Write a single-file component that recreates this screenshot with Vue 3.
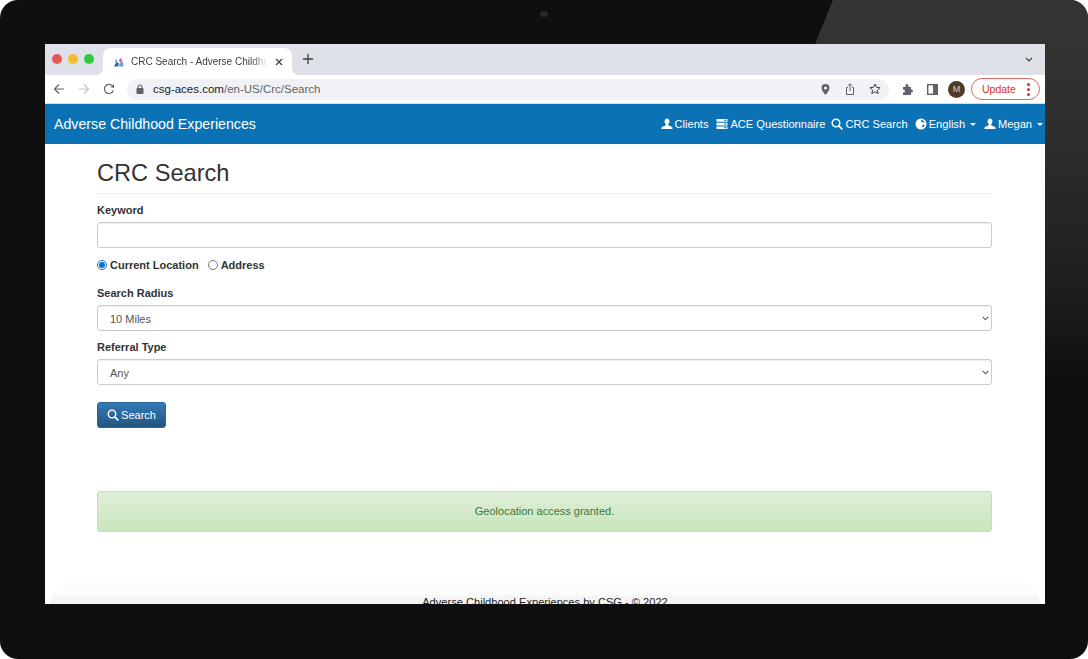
<script setup>
import { ref } from 'vue'

const keyword = ref('')
const locationMode = ref('current')
const radius = ref('10 Miles')
const referral = ref('Any')
</script>

<template>
  <div class="device">
    <div class="sheen"></div>
    <div class="camera"></div>
    <div class="screen">
      <div class="tabstrip">
        <div class="lights">
          <span class="light light--red"></span>
          <span class="light light--yellow"></span>
          <span class="light light--green"></span>
        </div>
        <div class="tab">
          <svg class="favicon" width="10" height="10" viewBox="0 0 10 10">
            <path d="M2 1.500 3.500 5 1 5.500z" fill="#5b9bdc" />
            <path d="M6 1l2.500 2L7 6 5 4z" fill="#e0608f" />
            <path d="M0 9.500 2.500 5 5 6.500 4 9.500z" fill="#2f5fb5" />
            <path d="M5.500 6.500 9 4.500l.5 5H5z" fill="#58a9df" />
          </svg>
          <span class="tab__title">CRC Search - Adverse Childhood</span>
          <svg class="tab__close" width="8" height="8" viewBox="0 0 8 8">
            <path d="M1 1l6 6M7 1 1 7" stroke="#3c4043" stroke-width="1.2" fill="none" />
          </svg>
        </div>
        <svg class="newtab" width="10" height="10" viewBox="0 0 10 10">
          <path d="M5 0v10M0 5h10" stroke="#3c4043" stroke-width="1.3" />
        </svg>
        <svg class="tabmenu" width="8" height="5" viewBox="0 0 8 5">
          <path d="M1 1l3 3 3-3" stroke="#3c4043" stroke-width="1.2" fill="none" />
        </svg>
      </div>

      <div class="toolbar">
        <svg width="12" height="12" viewBox="0 0 12 12">
          <path d="M11 6H1.500M6 1.500 1.500 6 6 10.500" stroke="#5f6368" stroke-width="1.2" fill="none" />
        </svg>
        <svg width="12" height="12" viewBox="0 0 12 12">
          <path d="M1 6h9.500M6 1.500 10.500 6 6 10.500" stroke="#bdc1c6" stroke-width="1.2" fill="none" />
        </svg>
        <svg width="12" height="12" viewBox="0 0 12 12">
          <path d="M10.300 7.500A4.600 4.600 0 1 1 9.400 2.800L11 4.400" stroke="#5f6368" stroke-width="1.200" fill="none" />
          <path d="M11 1v3.600H7.400z" fill="#5f6368" />
        </svg>
        <div class="omnibox">
          <svg width="8" height="10" viewBox="0 0 8 10">
            <rect x="0.500" y="4" width="7" height="6" rx="1" fill="#5f6368" />
            <path d="M2 4.500V3a2 2 0 0 1 4 0v1.500" stroke="#5f6368" stroke-width="1.100" fill="none" />
          </svg>
          <span class="omnibox__url">csg-aces.com<span class="omnibox__path">/en-US/Crc/Search</span></span>
          <svg class="omnibox__pin" width="9" height="11" viewBox="0 0 9 11">
            <path fill-rule="evenodd" d="M4.500 0A4 4 0 0 0 .5 4c0 2.800 4 7 4 7s4-4.200 4-7a4 4 0 0 0-4-4zm0 2.500a1.500 1.500 0 1 1 0 3 1.500 1.500 0 0 1 0-3z" fill="#5f6368" />
          </svg>
          <svg width="10" height="12" viewBox="0 0 10 12">
            <path d="M3 4.500H1.500v7h7v-7H7M5 8V1M3 2.800 5 .8l2 2" stroke="#5f6368" stroke-width="1" fill="none" />
          </svg>
          <svg width="12" height="12" viewBox="0 0 12 12">
            <path d="M6 1l1.500 3.300 3.600.4-2.700 2.400.8 3.500L6 8.800l-3.200 1.800.8-3.500L.9 4.700l3.600-.4z" stroke="#3c4043" stroke-width="1" fill="none" />
          </svg>
        </div>
        <svg width="12" height="12" viewBox="0 0 12 12">
          <path d="M1 4h2.500V2.500a1.500 1.500 0 0 1 3 0V4H9v2.500h.5a1.500 1.500 0 0 1 0 3H9V12H1V9.500h.5a1.500 1.500 0 0 0 0-3H1z" fill="#5f6368" />
        </svg>
        <svg width="11" height="11" viewBox="0 0 11 11">
          <rect x="0.700" y="0.700" width="9.600" height="9.600" fill="none" stroke="#5f6368" stroke-width="1.400" />
          <rect x="6" y="1" width="4" height="9" fill="#5f6368" />
        </svg>
        <span class="avatar">M</span>
        <span class="update">Update<span class="update__dots"><i></i><i></i><i></i></span></span>
      </div>

      <nav class="navbar">
        <span class="navbar__brand">Adverse Childhood Experiences</span>
        <div class="navbar__links">
          <a class="navlink">
            <svg width="12" height="12" viewBox="0 0 12 12"><path d="M6 .5c1.500 0 2.400 1.200 2.400 2.800 0 1.200-.5 2.300-1.200 2.900 0 .9.300 1.300 1 1.600 1.300.5 2.700.9 3.300 1.700v1.500H.5V9.500c.6-.8 2-1.200 3.300-1.700.7-.3 1-.7 1-1.600C4.100 5.600 3.600 4.500 3.600 3.300 3.600 1.700 4.500.5 6 .5z" fill="#fff" /></svg>
            Clients
          </a>
          <a class="navlink navlink--wide">
            <svg width="12" height="12" viewBox="0 0 12 12"><path d="M.5 1h11v2.700H.5zM.5 4.700h11v2.700H.5zM.5 8.400h11v2.700H.5z" fill="#fff" /><path d="M8 2.300h2.500M8 6h2.500M8 9.700h2.500" stroke="#0b72b5" stroke-width=".9" /></svg>
            ACE Questionnaire
          </a>
          <a class="navlink navlink--tight">
            <svg width="12" height="12" viewBox="0 0 12 12"><circle cx="5" cy="5" r="3.800" stroke="#fff" stroke-width="1.500" fill="none" /><path d="M7.800 7.800 11.300 11.300" stroke="#fff" stroke-width="1.800" /></svg>
            CRC Search
          </a>
          <a class="navlink">
            <svg width="12" height="12" viewBox="0 0 12 12"><circle cx="6" cy="6" r="5.500" fill="#fff" /><path d="M6.500 2c1.500 0 2.800 1 3.200 2.300-.8.500-1.500.3-2-.2-.6.300-1.200.2-1.500-.4-.3-.6-.1-1.200.3-1.700zM8 6.500c.8-.2 1.500 0 1.700.4-.3 1.200-1.100 2.200-2.200 2.600-.6-.7-.3-2.300.5-3z" fill="#0b72b5" /></svg>
            English
            <span class="caret"></span>
          </a>
          <a class="navlink navlink--wide">
            <svg width="12" height="12" viewBox="0 0 12 12"><path d="M6 .5c1.500 0 2.400 1.200 2.400 2.800 0 1.200-.5 2.300-1.200 2.900 0 .9.300 1.300 1 1.600 1.300.5 2.700.9 3.300 1.700v1.500H.5V9.500c.6-.8 2-1.200 3.300-1.700.7-.3 1-.7 1-1.600C4.100 5.600 3.600 4.500 3.600 3.300 3.600 1.700 4.500.5 6 .5z" fill="#fff" /></svg>
            Megan
            <span class="caret"></span>
          </a>
        </div>
      </nav>

      <main class="page">
        <h1 class="page__title">CRC Search</h1>

        <label class="field-label">Keyword</label>
        <input v-model="keyword" class="control" type="text" />

        <div class="radios">
          <label class="radio">
            <input v-model="locationMode" type="radio" value="current" />
            Current Location
          </label>
          <label class="radio">
            <input v-model="locationMode" type="radio" value="address" />
            Address
          </label>
        </div>

        <label class="field-label">Search Radius</label>
        <div class="select-wrap">
          <select v-model="radius" class="control control--select">
            <option>10 Miles</option>
            <option>25 Miles</option>
          </select>
          <svg class="chevron" width="7" height="5" viewBox="0 0 7 5">
            <path d="M.7.8 3.500 3.800 6.300.8" stroke="#555" stroke-width="1.100" fill="none" />
          </svg>
        </div>

        <label class="field-label">Referral Type</label>
        <div class="select-wrap">
          <select v-model="referral" class="control control--select">
            <option>Any</option>
          </select>
          <svg class="chevron" width="7" height="5" viewBox="0 0 7 5">
            <path d="M.7.8 3.500 3.800 6.300.8" stroke="#555" stroke-width="1.100" fill="none" />
          </svg>
        </div>

        <button class="search-btn" type="button">
          <svg width="12" height="12" viewBox="0 0 12 12"><circle cx="5" cy="5" r="3.800" stroke="#fff" stroke-width="1.400" fill="none" /><path d="M7.800 7.800 11.300 11.300" stroke="#fff" stroke-width="1.700" /></svg>
          Search
        </button>

        <div class="alert">Geolocation access granted.</div>
      </main>

      <footer class="footer">
        <div class="footer__inner">Adverse Childhood Experiences by CSG - © 2022</div>
      </footer>
    </div>
  </div>
</template>

<style>
html, body {
  margin: 0;
  background: #fff;
}
</style>

<style scoped>
.device {
  position: relative;
  box-sizing: border-box;
  width: 1088px;
  height: 659px;
  padding: 44px 43px 55px 45px;
  background: #0f0f0f;
  border-radius: 18px;
  overflow: hidden;
  font-family: "Liberation Sans", Arial, sans-serif;
}

.sheen {
  position: absolute;
  inset: 0;
  background: linear-gradient(180deg, #353535 0, #2e2e2e 130px, #1f1f1f 280px, #0f0f0f 378px);
  clip-path: polygon(833px 0, 1088px 0, 1088px 380px, 1045px 380px, 1045px 44px, 815px 44px);
}

.camera {
  position: absolute;
  top: 11px;
  left: 540px;
  width: 8px;
  height: 6px;
  border-radius: 50%;
  background: #2a2a2a;
}

.screen {
  position: relative;
  display: flex;
  flex-direction: column;
  height: 560px;
  overflow: hidden;
  background: #fff;
}

.tabstrip {
  position: relative;
  display: flex;
  align-items: flex-end;
  height: 31px;
  flex: none;
  background: #dee1e8;
}

.lights {
  display: flex;
  gap: 6px;
  align-self: center;
  margin: 0 0 2px 7px;
}

.light {
  width: 10px;
  height: 10px;
  border-radius: 50%;
}

.light--red { background: #e25a55; }
.light--yellow { background: #f5bb2c; }
.light--green { background: #2ec840; }

.tab {
  position: relative;
  display: flex;
  align-items: center;
  width: 189px;
  height: 27px;
  margin-left: 9px;
  box-sizing: border-box;
  padding: 0 9px 0 11px;
  background: #fff;
  border-radius: 8px 8px 0 0;
}

.tab::before,
.tab::after {
  content: "";
  position: absolute;
  bottom: 0;
  width: 6px;
  height: 6px;
}

.tab::before {
  left: -6px;
  background: radial-gradient(circle at 0 0, transparent 5.500px, #fff 6px);
}

.tab::after {
  right: -6px;
  background: radial-gradient(circle at 100% 0, transparent 5.500px, #fff 6px);
}

.favicon { flex: none; }

.tab__title {
  flex: 1;
  margin-left: 7px;
  overflow: hidden;
  white-space: nowrap;
  font-size: 10px;
  line-height: 12px;
  color: #3c4043;
  -webkit-mask-image: linear-gradient(90deg, #000 88%, transparent 100%);
  mask-image: linear-gradient(90deg, #000 88%, transparent 100%);
}

.tab__close {
  flex: none;
  margin-left: 7px;
}

.newtab {
  align-self: center;
  margin: 0 0 1px 11px;
}

.tabmenu {
  align-self: center;
  margin: 0 12px 0 auto;
}

.toolbar {
  display: flex;
  align-items: center;
  height: 29px;
  flex: none;
  padding: 0 5px 0 8px;
  background: #fff;
  box-sizing: border-box;
  gap: 13px;
  border-bottom: 1px solid #d5dde6;
}

.omnibox {
  display: flex;
  align-items: center;
  flex: none;
  gap: 14px;
  width: 762px;
  height: 21px;
  margin-left: -1px;
  box-sizing: border-box;
  padding: 0 8px 0 9px;
  border-radius: 11px;
  background: #f0f2f5;
}

.omnibox__url {
  margin-left: -5px;
  flex: 1;
  font-size: 11.500px;
  color: #202124;
}

.omnibox__path { color: #5f6368; }

.omnibox__pin { margin-right: 1px; }

.avatar {
  display: flex;
  align-items: center;
  justify-content: center;
  width: 17px;
  height: 17px;
  margin-left: -3px;
  border-radius: 50%;
  background: #4f3b2c;
  color: #d8d0c8;
  font-size: 9px;
}

.update {
  display: flex;
  align-items: center;
  justify-content: space-between;
  box-sizing: border-box;
  flex: 1;
  height: 22px;
  margin-left: -7px;
  padding: 0 9px 0 10px;
  border: 1px solid #dd6a65;
  border-radius: 11px;
  color: #d93025;
  font-size: 10.500px;
}

.update__dots {
  display: flex;
  flex-direction: column;
  gap: 2px;
}

.update__dots i {
  width: 3px;
  height: 3px;
  border-radius: 50%;
  background: #d93025;
}

.navbar {
  display: flex;
  align-items: center;
  justify-content: space-between;
  flex: none;
  height: 40px;
  padding: 0 2px 0 9px;
  box-sizing: border-box;
  background: #0b72b5;
  color: #fff;
}

.navbar__brand { font-size: 14.200px; }

.navbar__links {
  display: flex;
  gap: 7px;
}

.navlink {
  display: flex;
  align-items: center;
  gap: 2px;
  font-size: 11.100px;
}

.navlink--wide { margin-left: 1px; }
.navlink--tight { margin-left: -1px; }

.caret {
  width: 0;
  height: 0;
  margin-left: 3px;
  border-top: 3px solid #fff;
  border-left: 3px solid transparent;
  border-right: 3px solid transparent;
}

.page {
  display: flex;
  flex-direction: column;
  flex: none;
  padding: 0 53px 0 52px;
  color: #333;
}

.page__title {
  margin: 16px 0 0;
  padding-bottom: 6px;
  font-size: 23.600px;
  font-weight: 400;
  line-height: 27px;
  border-bottom: 1px solid #eee;
}

.field-label {
  margin-bottom: 6px;
  font-size: 11px;
  font-weight: 700;
  line-height: 12px;
  color: #333;
}

.page__title + .field-label { margin-top: 10px; }

.control {
  width: 100%;
  height: 26px;
  box-sizing: border-box;
  border: 1px solid #ccc;
  border-radius: 3px;
  background: #fff;
  box-shadow: inset 0 1px 1px rgba(0, 0, 0, 0.075);
  font: 11px "Liberation Sans", Arial, sans-serif;
  color: #555;
}

.control--select {
  display: block;
  appearance: none;
  padding: 1px 12px 0;
}

.radios {
  display: flex;
  gap: 9px;
  margin: 11px 0 16px;
}

.radio {
  display: flex;
  align-items: center;
  gap: 3px;
  font-size: 11px;
  font-weight: 700;
  line-height: 12px;
}

.radio input {
  width: 10px;
  height: 10px;
  margin: 0;
  accent-color: #0b6fd6;
}

.select-wrap {
  position: relative;
  margin-bottom: 10px;
}

.chevron {
  position: absolute;
  top: 11px;
  right: 3px;
}

.search-btn {
  display: flex;
  align-items: center;
  justify-content: center;
  gap: 2px;
  width: 69px;
  height: 26px;
  margin-top: 7px;
  padding: 0;
  border: 1px solid #2b669a;
  border-radius: 3px;
  background: linear-gradient(180deg, #337ab7, #245580);
  color: #fff;
  font: 11px "Liberation Sans", Arial, sans-serif;
}

.alert {
  margin-top: 63px;
  height: 41px;
  box-sizing: border-box;
  line-height: 39px;
  text-align: center;
  font-size: 11px;
  color: #3c763d;
  border: 1px solid #bfe0b2;
  border-radius: 3px;
  background: linear-gradient(180deg, #dfefd8, #c8e6bc);
}

.footer {
  flex: none;
  margin: 50px 5px 0;
  border-radius: 22px 22px 0 0;
  background: linear-gradient(180deg, #fdfdfd, #fbfbfb 13px, #f5f5f6 14px);
}

.footer__inner {
  padding-top: 13px;
  font-size: 11.100px;
  line-height: 14px;
  text-align: center;
  color: #222;
}
</style>
